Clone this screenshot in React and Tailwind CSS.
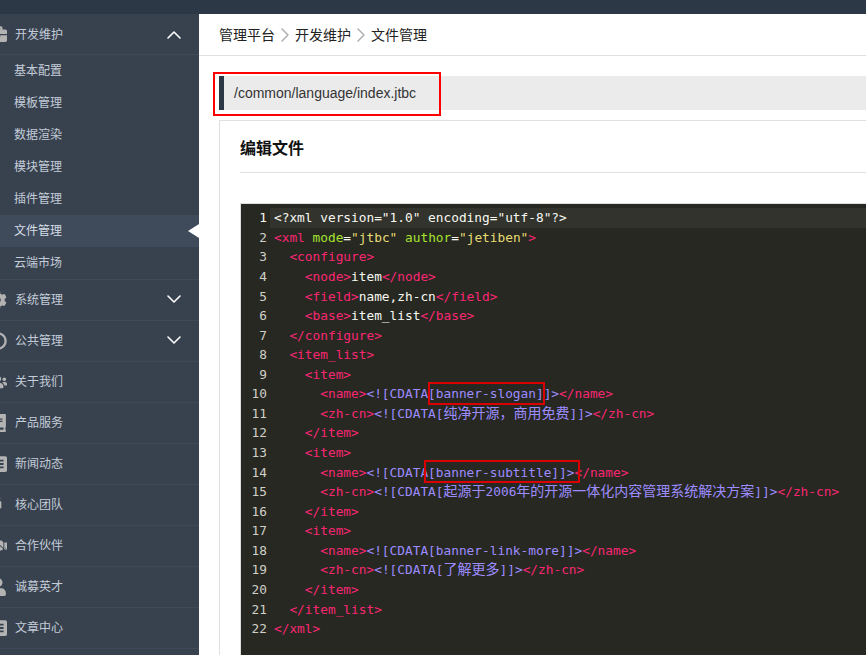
import React from 'react';
import { LuChevronDown, LuChevronUp, LuChevronRight } from 'react-icons/lu';
import { FaBriefcase, FaCog, FaAdjust, FaUsers, FaBook, FaMale, FaHandshake, FaUser, FaListAlt } from 'react-icons/fa';

const subMenu = ['基本配置', '模板管理', '数据渲染', '模块管理', '插件管理', '文件管理', '云端市场'];

const menu = [
  { name: '系统管理', icon: FaCog, arrow: true },
  { name: '公共管理', icon: FaAdjust, arrow: true },
  { name: '关于我们', icon: FaUsers },
  { name: '产品服务', icon: FaBook },
  { name: '新闻动态', icon: FaListAlt },
  { name: '核心团队', icon: FaMale },
  { name: '合作伙伴', icon: FaHandshake },
  { name: '诚募英才', icon: FaUser },
  { name: '文章中心', icon: FaListAlt },
];

const colors = {
  t: 'text-[#f92672]',
  a: 'text-[#a6e22e]',
  s: 'text-[#e6db74]',
  w: 'text-[#f8f8f2]',
  c: 'text-[#9d8cff]',
  z: 'text-[#9d8cff] text-[14px]',
};

const tag = (s) => ['t', s];
const white = (s) => ['w', s];
const cdata = (s) => ['c', s];
const zh = (s) => ['z', s];

const lines = [
  [white('<?xml version="1.0" encoding="utf-8"?>')],
  [tag('<xml '), ['a', 'mode'], white('='), ['s', '"jtbc"'], white(' '), ['a', 'author'], white('='), ['s', '"jetiben"'], tag('>')],
  [tag('  <configure>')],
  [tag('    <node>'), white('item'), tag('</node>')],
  [tag('    <field>'), white('name,zh-cn'), tag('</field>')],
  [tag('    <base>'), white('item_list'), tag('</base>')],
  [tag('  </configure>')],
  [tag('  <item_list>')],
  [tag('    <item>')],
  [tag('      <name>'), cdata('<![CDATA[banner-slogan]]>'), tag('</name>')],
  [tag('      <zh-cn>'), cdata('<![CDATA['), zh('纯净开源，商用免费'), cdata(']]>'), tag('</zh-cn>')],
  [tag('    </item>')],
  [tag('    <item>')],
  [tag('      <name>'), cdata('<![CDATA[banner-subtitle]]>'), tag('</name>')],
  [tag('      <zh-cn>'), cdata('<![CDATA['), zh('起源于'), cdata('2006'), zh('年的开源一体化内容管理系统解决方案'), cdata(']]>'), tag('</zh-cn>')],
  [tag('    </item>')],
  [tag('    <item>')],
  [tag('      <name>'), cdata('<![CDATA[banner-link-more]]>'), tag('</name>')],
  [tag('      <zh-cn>'), cdata('<![CDATA['), zh('了解更多'), cdata(']]>'), tag('</zh-cn>')],
  [tag('    </item>')],
  [tag('  </item_list>')],
  [tag('</xml>')],
];

function Sidebar() {
  return (
    <aside className="w-[199px] shrink-0 overflow-hidden bg-[#38424f] text-[12px] text-[#c3ccd8] font-['Noto_Sans_CJK_SC',sans-serif]">
      <div className="flex h-[41px] items-center justify-between border-b border-[#3f4a58]">
        <div className="flex items-center gap-[8px]">
          <FaBriefcase className="-ml-[11px] h-[18px] w-[18px] text-[#b3b3b3]" />
          <span>开发维护</span>
        </div>
        <LuChevronUp strokeWidth={1.6} className="mr-[13px] mt-[2px] h-[24px] w-[24px] text-white" />
      </div>
      <ul className="border-b border-[#3f4a58]">
        {subMenu.map((name) => (
          <li
            key={name}
            className={`relative flex h-[32px] items-center pb-[2px] pl-[14px] ${name === '文件管理' ? 'bg-[#3f4b5b] text-[#d5dce5]' : ''}`}
          >
            {name}
            {name === '文件管理' && (
              <span className="absolute right-0 top-[9px] h-0 w-0 border-y-[7px] border-r-[11px] border-y-transparent border-r-white" />
            )}
          </li>
        ))}
      </ul>
      {menu.map((item) => {
        const Icon = item.icon;
        return (
          <div key={item.name} className="flex h-[41px] items-center justify-between border-b border-[#3f4a58]">
            <div className="flex items-center gap-[8px]">
              <Icon className="-ml-[11px] h-[18px] w-[18px] text-[#b3b3b3]" />
              <span className="pb-[2px]">{item.name}</span>
            </div>
            {item.arrow && <LuChevronDown strokeWidth={1.6} className="mr-[13px] -mt-[2px] h-[24px] w-[24px] text-white" />}
          </div>
        );
      })}
    </aside>
  );
}

function Editor() {
  return (
    <div className="relative ml-[20px] mt-[30px] h-[500px] whitespace-pre border-l border-t border-[#ddd] bg-[#272822] pt-[4.25px] text-[12.8px] leading-[19.57px] font-['DejaVu_Sans_Mono','Noto_Sans_CJK_SC',monospace]">
      {lines.map((parts, i) => (
        <div key={i} className="flex h-[19.57px]">
          <div className={`w-[26px] shrink-0 text-right ${i === 0 ? 'text-[#f8f8f2]' : 'text-[#d0d0c8]'}`}>{i + 1}</div>
          <div className={`ml-[3px] grow pl-[4px] ${i === 0 ? 'bg-[#31332c]' : ''}`}>
            {parts.map(([kind, text], j) => (
              <span key={j} className={colors[kind]}>{text}</span>
            ))}
          </div>
        </div>
      ))}
      <div className="absolute left-[187px] top-[178px] h-[23px] w-[117px] border-2 border-[#d80000]" />
      <div className="absolute left-[183px] top-[256px] h-[23px] w-[156px] border-2 border-[#d80000]" />
    </div>
  );
}

export default function App() {
  return (
    <div className="flex h-[655px] w-[866px] flex-col overflow-hidden bg-white">
      <div className="h-[14px] shrink-0 bg-[#2c3845]" />
      <div className="flex min-h-0 grow">
        <Sidebar />
        <main className="min-w-0 grow overflow-hidden">
          <div className="flex h-[42px] items-center border-b border-[#e0e0e0] pl-[20px] text-[14px] text-[#222] font-['Noto_Sans_CJK_SC',sans-serif]">
            <span>管理平台</span>
            <LuChevronRight strokeWidth={1.4} className="-mx-[2px] h-[24px] w-[24px] text-[#aaa]" />
            <span>开发维护</span>
            <LuChevronRight strokeWidth={1.4} className="-mx-[2px] h-[24px] w-[24px] text-[#aaa]" />
            <span>文件管理</span>
          </div>
          <div className="pl-[20px] pt-[20px]">
            <div className="relative flex h-[34px] items-center border-l-[5px] border-[#2c3845] bg-[#ebebeb] pl-[10px] text-[14px] text-[#333] font-['Liberation_Sans',sans-serif]">
              /common/language/index.jtbc
              <div className="absolute -left-[11px] -top-[4px] h-[44px] w-[228px] border-2 border-[#ff0000]" />
            </div>
            <div className="mt-[10px] border border-b-0 border-r-0 border-[#e0e0e0]">
              <h2 className="ml-[20px] flex h-[52px] items-center border-b border-[#e0e0e0] text-[16px] font-bold text-[#111] font-['Noto_Sans_CJK_SC',sans-serif]">
                编辑文件
              </h2>
              <Editor />
            </div>
          </div>
        </main>
      </div>
    </div>
  );
}
